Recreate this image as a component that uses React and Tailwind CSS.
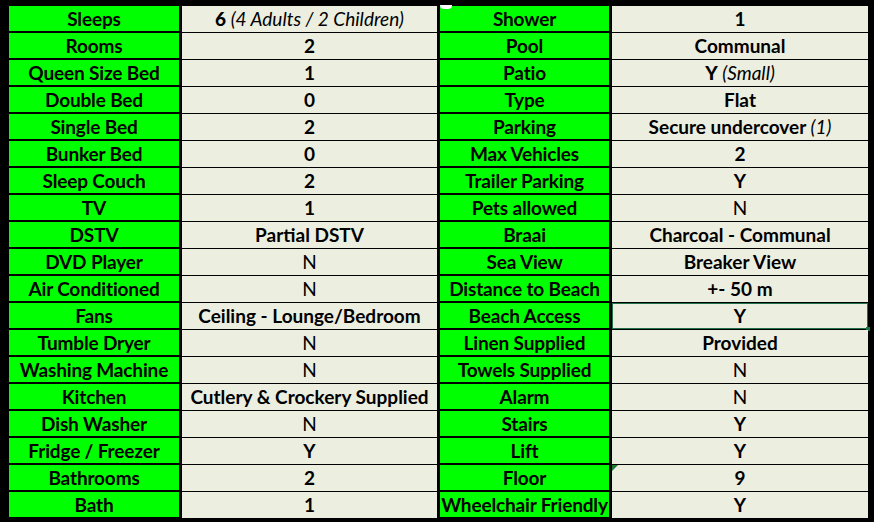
import React from "react";

const rows = [
  ["Sleeps", <><b>6</b> <i className="font-normal">(4 Adults / 2 Children)</i></>, "Shower", "1"],
  ["Rooms", "2", "Pool", "Communal"],
  ["Queen Size Bed", "1", "Patio", <><b>Y</b> <i className="font-normal">(Small)</i></>],
  ["Double Bed", "0", "Type", "Flat"],
  ["Single Bed", "2", "Parking", <>Secure undercover <i className="font-normal">(1)</i></>],
  ["Bunker Bed", "0", "Max Vehicles", "2"],
  ["Sleep Couch", "2", "Trailer Parking", "Y"],
  ["TV", "1", "Pets allowed", "N"],
  ["DSTV", "Partial DSTV", "Braai", "Charcoal - Communal"],
  ["DVD Player", "N", "Sea View", "Breaker View"],
  ["Air Conditioned", "N", "Distance to Beach", "+- 50 m"],
  ["Fans", "Ceiling - Lounge/Bedroom", "Beach Access", "Y"],
  ["Tumble Dryer", "N", "Linen Supplied", "Provided"],
  ["Washing Machine", "N", "Towels Supplied", "N"],
  ["Kitchen", "Cutlery & Crockery Supplied", "Alarm", "N"],
  ["Dish Washer", "N", "Stairs", "Y"],
  ["Fridge / Freezer", "Y", "Lift", "Y"],
  ["Bathrooms", "2", "Floor", "9"],
  ["Bath", "1", "Wheelchair Friendly", "Y"],
];

function Label({ children, first }) {
  return (
    <div className="relative h-[26px] bg-[#00ff00] border-b border-black flex items-center justify-center font-bold whitespace-nowrap tracking-[-0.15px]">
      {first && <span className="absolute left-0 top-[-1px] w-[12px] h-[4px] rounded-b-full bg-white" />}
      <span>{children}</span>
    </div>
  );
}

function Value({ children, selected, flagged }) {
  const plain = children === "N";
  return (
    <div
      className={`relative h-[26px] pb-[1px] bg-[#eceee0] flex items-center justify-center whitespace-nowrap ${
        plain ? "font-normal" : "font-bold"
      } ${selected ? "outline outline-1 outline-[#217346] -outline-offset-1" : ""}`}
    >
      {flagged && (
        <span className="absolute left-0 top-0 w-0 h-0 border-t-[6px] border-t-[#1f7a3a] border-r-[6px] border-r-transparent" />
      )}
      {selected && <span className="absolute right-[-2px] bottom-[-2px] w-[4px] h-[4px] bg-[#217346]" />}
      <span>{children}</span>
    </div>
  );
}

export default function App() {
  return (
    <div
      className="w-[874px] h-[522px] bg-black pl-[9px] pt-[6px] text-[19px] text-black leading-none overflow-hidden"
      style={{ fontFamily: "Lato, 'Liberation Sans', sans-serif" }}
    >
      <div className="flex flex-col gap-[1px]">
        {rows.map((r, i) => (
          <div key={i} className="grid grid-cols-[170px_255px_169px_256px] gap-x-[3px]">
            <Label>{r[0]}</Label>
            <Value>{r[1]}</Value>
            <Label first={i === 0}>{r[2]}</Label>
            <Value selected={r[2] === "Beach Access"} flagged={r[2] === "Floor"}>
              {r[3]}
            </Value>
          </div>
        ))}
      </div>
    </div>
  );
}
